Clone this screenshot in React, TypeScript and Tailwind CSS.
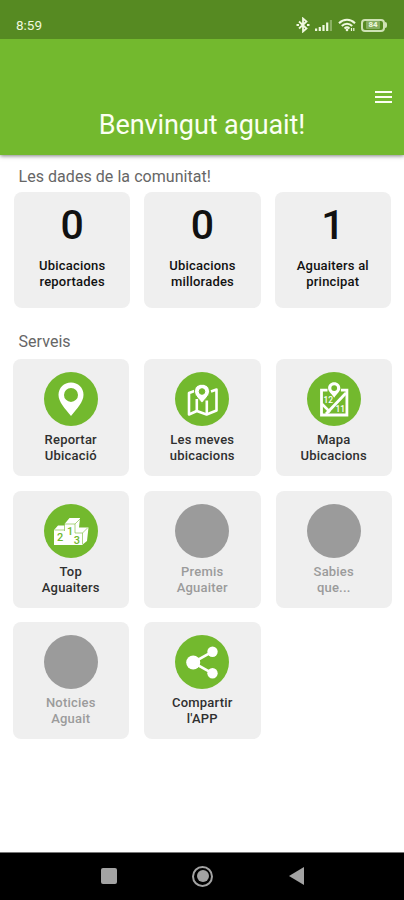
import type { ReactNode } from 'react';

const stats = [
  { value: 0, lines: ['Ubicacions', 'reportades'] },
  { value: 0, lines: ['Ubicacions', 'millorades'] },
  { value: 1, lines: ['Aguaiters al', 'principat'] },
];

function PinIcon() {
  return (
    <svg viewBox="0 0 54 54" className="size-[54px]">
      <path
        fill="#fff"
        fillRule="evenodd"
        d="M27 10.500c-7 0-12.500 5.400-12.500 12.200C14.500 30 21 36.500 27 44c6-7.500 12.500-14 12.500-21.300C39.500 15.900 34 10.500 27 10.500zm0 5.400a7 7 0 1 1 0 14 7 7 0 0 1 0-14z"
      />
    </svg>
  );
}

function FoldedMapIcon() {
  return (
    <svg viewBox="0 0 54 54" className="size-[54px]" fill="none" stroke="#fff" strokeWidth="2.600" strokeLinejoin="round">
      <path d="M19.500 19L14 21v21.500l7.800-3.500 9.800 3.500 9.900-4V17.500l-5.500 2" />
      <path d="M21.800 27v12M31.800 28.500v14" />
      <path
        fill="#fff"
        stroke="#73b92e"
        strokeWidth="1"
        fillRule="evenodd"
        d="M27 12.200c-4.300 0-7.500 3.100-7.500 7.200 0 4.400 4.200 7 7.500 12 3.300-5 7.500-7.600 7.500-12 0-4.100-3.200-7.200-7.500-7.200zm0 4.500a2.800 2.800 0 1 1 0 5.600 2.800 2.800 0 0 1 0-5.600z"
      />
    </svg>
  );
}

function CityMapIcon() {
  return (
    <svg viewBox="0 0 54 54" className="size-[54px]">
      <path fill="none" stroke="#fff" strokeWidth="2.800" d="M20.500 18.200h-6V43h25.400V18.200h-6" />
      <path fill="none" stroke="#fff" strokeWidth="2.800" d="M39 21L19 42" />
      <path fill="none" stroke="#fff" strokeWidth="2.500" d="M15 32l8 8" />
      <path
        fill="#fff"
        fillRule="evenodd"
        d="M27.200 10.300c-3.500 0-6.100 2.500-6.100 5.700 0 3.500 3.500 5.700 6.100 9.800 2.600-4.100 6.100-6.300 6.100-9.800 0-3.200-2.600-5.700-6.100-5.700zm0 2.900a2.900 2.900 0 1 1 0 5.800 2.900 2.900 0 0 1 0-5.800z"
      />
      <g fill="#fff" fontFamily="Roboto, sans-serif" fontSize="8.500" fontWeight="500">
        <text x="16.500" y="30.800">12</text>
        <text x="28.500" y="40">11</text>
      </g>
    </svg>
  );
}

function PodiumIcon() {
  return (
    <svg viewBox="0 0 54 54" className="size-[54px]">
      <path fill="#fff" d="M20.500 20l5-6H36l-1 9.500h9.500l-1.500 13.500-5 4H10V26l4-4.500h6.500z" />
      <path
        fill="none"
        stroke="#73b92e"
        strokeWidth=".6"
        d="M10.500 26H20.500M20.500 20h10.500v9M20.500 20v7M31 20l5-5M31 29h7.500l5-5M38.500 29v11"
      />
      <g fill="#73b92e" fontFamily="Roboto, sans-serif" fontWeight="500">
        <text x="13" y="37" fontSize="11">2</text>
        <text x="23" y="30.500" fontSize="11">1</text>
        <text x="29.800" y="39.800" fontSize="11">3</text>
      </g>
    </svg>
  );
}

function ShareIcon() {
  return (
    <svg viewBox="0 0 54 54" className="size-[54px]" fill="#fff">
      <path fill="none" stroke="#fff" strokeWidth="2.600" d="M37.500 16.700L18 27.500l19.500 10.800" />
      <circle cx="18.200" cy="27.500" r="7" />
      <circle cx="37.500" cy="16.700" r="5.200" />
      <circle cx="37.500" cy="38.300" r="5.200" />
    </svg>
  );
}

type Service = { lines: string[]; icon?: ReactNode };

const services: Service[] = [
  { lines: ['Reportar', 'Ubicació'], icon: <PinIcon /> },
  { lines: ['Les meves', 'ubicacions'], icon: <FoldedMapIcon /> },
  { lines: ['Mapa', 'Ubicacions'], icon: <CityMapIcon /> },
  { lines: ['Top', 'Aguaiters'], icon: <PodiumIcon /> },
  { lines: ['Premis', 'Aguaiter'] },
  { lines: ['Sabies', 'que...'] },
  { lines: ['Noticies', 'Aguait'] },
  { lines: ['Compartir', "l'APP"], icon: <ShareIcon /> },
];

function StatusBar() {
  return (
    <div className="relative z-10 flex h-[39px] items-center justify-between bg-[#568a22] pt-[11px] pr-[17px] pl-4 text-[#eff8df]">
      <span className="text-[13.5px]">8:59</span>
      <div className="flex items-center gap-[5px]">
        {/* Bluetooth */}
        <svg width="14" height="16" viewBox="0 0 14 16" fill="none" stroke="currentColor" strokeWidth="1.800">
          <path d="M3 4.500l7.500 7L7 14.500v-13l3.500 3L3 11.500" />
          <path d="M.500 8h2.500M11 8h2.500" />
        </svg>
        {/* Signal */}
        <svg width="18" height="12" viewBox="0 0 18 12" fill="currentColor">
          <path d="M0 9.500h2.200V12H0zM3.700 8h2.200v4h-2.200zM7.400 6h2.200v6h-2.200zM11.100 3.500h2.200V12h-2.200z" />
          <path opacity=".35" d="M14.800 1h2.200v11h-2.200z" />
        </svg>
        {/* Wi-Fi */}
        <svg width="18" height="14" viewBox="0 0 18 14" fill="none" stroke="currentColor" strokeWidth="2">
          <path d="M1 5.200c4.600-4.600 11.400-4.600 16 0M3.800 8c3-3 7.400-3 10.400 0M6.500 10.500c1.600-1.400 3.400-1.400 5 0" />
          <circle cx="9" cy="12" r="1.300" fill="currentColor" stroke="none" />
          <path strokeWidth="1.200" d="M13.500 13v-3M15.800 10v3" />
        </svg>
        {/* Battery */}
        <div className="flex items-center">
          <div className="flex h-[13px] w-[24px] items-center justify-center rounded-[4px] border-2 border-[#cfe2b5]">
            <span className="rounded-[1px] bg-[#86ad60] px-[2px] text-[8px] leading-[8px] font-bold">84</span>
          </div>
          <div className="h-[6px] w-[2px] rounded-r-full bg-[#cfe2b5]" />
        </div>
      </div>
    </div>
  );
}

function Header() {
  return (
    <header className="flex h-[116px] flex-col bg-[#73b92e] text-[#fbfff2] shadow-[0_1px_4px_rgba(0,0,0,0.5)]">
      <button className="mt-[52px] mr-3 flex w-[17px] flex-col gap-[3px] self-end" aria-label="Menu">
        <span className="h-[2px] w-full bg-current" />
        <span className="h-[2px] w-full bg-current" />
        <span className="h-[2px] w-full bg-current" />
      </button>
      <h1 className="mt-[6px] text-center text-[27px] leading-8 tracking-[-0.1px]">Benvingut aguait!</h1>
    </header>
  );
}

function StatCard({ value, lines }: { value: number; lines: string[] }) {
  return (
    <div className="flex h-[116px] flex-col items-center rounded-lg bg-[#efefef] pt-[9px] text-[#111]">
      <div className="text-[41px] leading-[48px] font-medium">{value}</div>
      <div className="mt-[9px] text-center text-[13px] leading-4 font-medium tracking-[0.2px]">
        {lines.map(line => <div key={line}>{line}</div>)}
      </div>
    </div>
  );
}

function ServiceCard({ lines, icon }: Service) {
  return (
    <div className="flex h-[117px] flex-col items-center rounded-lg bg-[#efefef] pt-[13px]">
      <div className={`size-[54px] rounded-full ${icon ? 'bg-[#73b92e]' : 'bg-[#9b9b9b]'}`}>{icon}</div>
      <div
        className={`mt-[6px] text-center text-[13px] leading-4 font-medium tracking-[0.2px] ${
          icon ? 'text-[#303030]' : 'text-[#9b9b9b]'
        }`}
      >
        {lines.map(line => <div key={line}>{line}</div>)}
      </div>
    </div>
  );
}

function NavBar() {
  return (
    <nav className="flex h-[48px] items-center justify-center gap-[75.5px] border-t border-[#777] bg-black pb-px">
      <div className="size-4 rounded-[2px] bg-[#a3a3a3]" />
      <div className="flex size-[21px] items-center justify-center rounded-full border-2 border-[#a3a3a3]">
        <div className="size-[12px] rounded-full bg-[#a3a3a3]" />
      </div>
      <svg width="15" height="18" viewBox="0 0 15 18" fill="#a3a3a3">
        <path d="M0 9L15 0v18z" />
      </svg>
    </nav>
  );
}

export default function App() {
  return (
    <div className="flex h-[900px] w-[404px] flex-col overflow-hidden bg-white font-['Roboto',sans-serif]">
      <StatusBar />
      <Header />
      <main className="flex-1">
        <h2 className="mt-[12px] pl-[18.5px] text-[16px] leading-5 tracking-[0.05px] text-[#666]">
          Les dades de la comunitat!
        </h2>
        <div className="mt-[5px] grid grid-cols-3 gap-[14px] pr-[13px] pl-[14px]">
          {stats.map((s, i) => <StatCard key={i} {...s} />)}
        </div>
        <h2 className="mt-[24px] pl-[18.5px] text-[16px] leading-5 tracking-[0.05px] text-[#666]">Serveis</h2>
        <div className="mt-[7px] grid grid-cols-3 gap-x-[15px] gap-y-[14.5px] pr-[12px] pl-[12.5px]">
          {services.map(s => <ServiceCard key={s.lines[0]} {...s} />)}
        </div>
      </main>
      <NavBar />
    </div>
  );
}
